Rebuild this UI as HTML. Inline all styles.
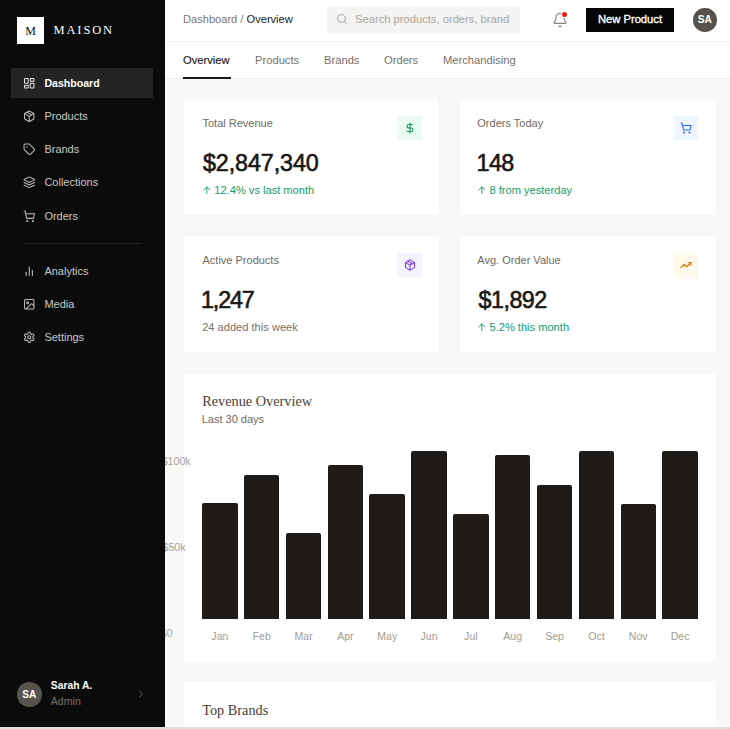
<!DOCTYPE html>
<html><head><meta charset="utf-8">
<style>
*{box-sizing:border-box;margin:0;padding:0}
html,body{width:730px;height:729px;overflow:hidden;background:#f9f9f7;font-family:"Liberation Sans",sans-serif;}
.abs{position:absolute}
#side{position:absolute;left:0;top:0;width:165px;height:729px;background:#0b0b0b;z-index:5}
.logo{left:17px;top:17px;width:27px;height:27px;background:#fff;color:#111;font-family:"Liberation Serif",serif;font-size:12px;display:flex;align-items:center;justify-content:center;padding-top:1px}
.brand{left:53.5px;top:22px;font-family:"Liberation Serif",serif;font-size:12.5px;letter-spacing:1.86px;color:#fff;line-height:16px}
.nav{position:absolute;left:11px;width:142px;height:30px;display:flex;align-items:center;padding-left:11.7px;color:#c9c9c6;font-size:11px}
.nav svg{width:12.5px;height:12.5px;margin-right:9.2px;flex:none;stroke:#bdbdb9;fill:none;stroke-width:2;stroke-linecap:round;stroke-linejoin:round}
.nav.on{background:#242424;color:#fff;font-weight:bold;font-size:10.6px}
.nav.on svg{stroke:#e6e6e6}
.div{left:23px;top:243px;width:118px;height:1px;background:#202020}
#hdr{left:165px;top:0;width:565px;height:42px;background:#fff;border-bottom:1px solid #f1f0ed}
.crumb{left:183px;top:12px;font-size:11.1px;color:#7b756f;line-height:14px}
.crumb b{font-weight:normal;color:#1c1917}
.search{left:327px;top:7px;width:193px;height:26px;background:#f4f4f2;overflow:hidden}
.search span{position:absolute;left:28px;top:4.6px;width:155px;overflow:hidden;font-size:11.2px;color:#aaa49d;white-space:nowrap;line-height:14px}
.btn{left:586px;top:8px;width:88px;height:24px;background:#050505;color:#fff;font-size:11.2px;-webkit-text-stroke:0.35px #fff;display:flex;align-items:center;justify-content:center;padding-bottom:2.4px}
.av{border-radius:50%;background:#57524b;color:#fff;font-weight:bold;display:flex;align-items:center;justify-content:center}
#tabs{left:165px;top:42px;width:565px;height:37px;background:#fff;border-bottom:1px solid #efeeeb}
.tab{position:absolute;top:53px;font-size:11.2px;color:#77716b;line-height:14px}
.tab.on{color:#1c1917;font-weight:normal;-webkit-text-stroke:0.15px #1c1917}
.ul{left:183px;top:77px;width:48px;height:2px;background:#1c1917;z-index:2}
.card{position:absolute;background:#fff;border:1px solid #f6f6f5}
.ct{position:absolute;left:18.5px;font-size:11px;color:#6f6a64;line-height:14px}
.cv{position:absolute;left:18px;font-size:23.3px;color:#1a1816;line-height:28px;-webkit-text-stroke:0.6px #1a1816}
.cs{position:absolute;left:18.5px;padding-left:11.8px;font-size:11.1px;color:#139d6d;line-height:14px}
.cs.g{padding-left:0;left:18.2px}
.ar{position:absolute;left:0;top:3.2px;width:7.6px;height:8px;fill:none;stroke:#139d6d;stroke-width:1;stroke-linecap:round;stroke-linejoin:round}
.cs.g{color:#77716b}
.ib{position:absolute;left:214px;top:17px;width:24px;height:24px;display:flex;align-items:center;justify-content:center}
.ib svg{width:12px;height:12px;fill:none;stroke-width:2.2;stroke-linecap:round;stroke-linejoin:round}
.bars{left:202.1px;top:440px;width:495.7px;height:179px;display:flex;gap:6.4px;align-items:flex-end}
.bar{flex:1;background:#1f1b18;border-radius:2px 2px 0 0}
.ml{position:absolute;top:629px;font-size:10.6px;color:#a29d96;line-height:14px;width:40px;text-align:center}
.yl{position:absolute;font-size:10.6px;color:#a7a29b;line-height:14px;text-align:right;width:60px}
.ser{font-family:"Liberation Serif",serif;color:#46413c}
</style></head><body>

<div id="hdr" class="abs"></div>
<div class="abs crumb">Dashboard / <b>Overview</b></div>
<div class="abs search">
  <svg class="abs" style="left:9px;top:5.5px" width="12" height="12" viewBox="0 0 24 24" fill="none" stroke="#a8a29e" stroke-width="2" stroke-linecap="round"><circle cx="11" cy="11" r="8"/><path d="m21 21-4.3-4.3"/></svg>
  <span>Search products, orders, brands...</span>
</div>
<svg class="abs" style="left:552.3px;top:12px" width="16" height="16" viewBox="0 0 24 24" fill="none" stroke="#8a8580" stroke-width="1.8" stroke-linecap="round" stroke-linejoin="round"><path d="M10.268 21a2 2 0 0 0 3.464 0"/><path d="M3.262 15.326A1 1 0 0 0 4 17h16a1 1 0 0 0 .74-1.673C19.41 13.956 18 12.499 18 8A6 6 0 0 0 6 8c0 4.499-1.411 5.956-2.738 7.326"/></svg>
<div class="abs" style="left:561.8px;top:12.4px;width:5px;height:5px;border-radius:50%;background:#f01a1a;box-shadow:0 0 0 1px #fff"></div>
<div class="abs btn">New Product</div>
<div class="abs av" style="left:693px;top:8px;width:23.5px;height:23.5px;font-size:10.2px">SA</div>

<div id="tabs" class="abs"></div>
<div class="tab on" style="left:183px">Overview</div>
<div class="tab" style="left:255px">Products</div>
<div class="tab" style="left:324px">Brands</div>
<div class="tab" style="left:384px">Orders</div>
<div class="tab" style="left:443px">Merchandising</div>
<div class="abs ul"></div>

<!-- stat cards -->
<div class="card" style="left:183px;top:98px;width:257px;height:118px">
  <div class="ct" style="top:17px">Total Revenue</div>
  <div class="ib" style="background:#ebfbf2"><svg viewBox="0 0 24 24" stroke="#169a6c"><line x1="12" x2="12" y1="2" y2="22"/><path d="M17 5H9.5a3.5 3.5 0 0 0 0 7h5a3.5 3.5 0 0 1 0 7H6"/></svg></div>
  <div class="cv" style="top:50px;margin-left:1px;letter-spacing:-0.1px">$2,847,340</div>
  <div class="cs" style="top:84px"><svg class="ar" viewBox="0 0 8 8"><path d="M4 7.6V0.8M0.9 3.9L4 0.8L7.1 3.9"/></svg>12.4% vs last month</div>
</div>
<div class="card" style="left:459px;top:98px;width:258px;height:118px">
  <div class="ct" style="top:17px;margin-left:-1.2px">Orders Today</div>
  <div class="ib" style="background:#eff6ff"><svg viewBox="0 0 24 24" stroke="#2a6af5"><circle cx="8" cy="21" r="1"/><circle cx="19" cy="21" r="1"/><path d="M2.05 2.05h2l2.66 12.42a2 2 0 0 0 2 1.58h9.78a2 2 0 0 0 1.95-1.57l1.65-7.43H5.12"/></svg></div>
  <div class="cv" style="top:50px;margin-left:-1.4px;letter-spacing:-0.6px">148</div>
  <div class="cs" style="top:84px;margin-left:-0.8px"><svg class="ar" viewBox="0 0 8 8"><path d="M4 7.6V0.8M0.9 3.9L4 0.8L7.1 3.9"/></svg>8 from yesterday</div>
</div>
<div class="card" style="left:183px;top:235px;width:257px;height:118px">
  <div class="ct" style="top:17px">Active Products</div>
  <div class="ib" style="background:#f5f3ff"><svg viewBox="0 0 24 24" stroke="#7c3aed"><path d="M11 21.73a2 2 0 0 0 2 0l7-4A2 2 0 0 0 21 16V8a2 2 0 0 0-1-1.73l-7-4a2 2 0 0 0-2 0l-7 4A2 2 0 0 0 3 8v8a2 2 0 0 0 1 1.73z"/><path d="M12 22V12"/><path d="m3.3 7 7.703 4.734a2 2 0 0 0 1.994 0L20.7 7"/><path d="m7.5 4.27 9 5.15"/></svg></div>
  <div class="cv" style="top:50px;margin-left:-1px;letter-spacing:-1.15px">1,247</div>
  <div class="cs g" style="top:84px">24 added this week</div>
</div>
<div class="card" style="left:459px;top:235px;width:258px;height:118px">
  <div class="ct" style="top:17px;margin-left:-1.2px">Avg. Order Value</div>
  <div class="ib" style="background:#fefaea"><svg viewBox="0 0 24 24" stroke="#e07a10"><polyline points="22 7 13.5 15.5 8.5 10.5 2 17"/><polyline points="16 7 22 7 22 13"/></svg></div>
  <div class="cv" style="top:50px;margin-left:0.5px;letter-spacing:-0.5px">$1,892</div>
  <div class="cs" style="top:84px;margin-left:-0.8px"><svg class="ar" viewBox="0 0 8 8"><path d="M4 7.6V0.8M0.9 3.9L4 0.8L7.1 3.9"/></svg>5.2% this month</div>
</div>

<!-- chart -->
<div class="card" style="left:183px;top:372px;width:534px;height:291px">
  <div class="abs ser" style="left:18.2px;top:19px;font-size:14.3px;line-height:18px">Revenue Overview</div>
  <div class="ct" style="top:39.3px;margin-left:-0.8px">Last 30 days</div>
</div>
<div class="yl" style="left:130.6px;top:454px">$100k</div>
<div class="yl" style="left:125.5px;top:540px">$50k</div>
<div class="yl" style="left:112.6px;top:626px">$0</div>
<div class="abs bars">
  <div class="bar" style="height:115.6px"></div>
  <div class="bar" style="height:144.5px"></div>
  <div class="bar" style="height:85.7px"></div>
  <div class="bar" style="height:154.1px"></div>
  <div class="bar" style="height:124.9px"></div>
  <div class="bar" style="height:168.3px"></div>
  <div class="bar" style="height:105px"></div>
  <div class="bar" style="height:163.9px"></div>
  <div class="bar" style="height:134.4px"></div>
  <div class="bar" style="height:168.3px"></div>
  <div class="bar" style="height:115.4px"></div>
  <div class="bar" style="height:168.3px"></div>
</div>
<div class="ml" style="left:199.9px">Jan</div>
<div class="ml" style="left:241.7px">Feb</div>
<div class="ml" style="left:283.6px">Mar</div>
<div class="ml" style="left:325.4px">Apr</div>
<div class="ml" style="left:367.2px">May</div>
<div class="ml" style="left:409.1px">Jun</div>
<div class="ml" style="left:450.9px">Jul</div>
<div class="ml" style="left:492.7px">Aug</div>
<div class="ml" style="left:534.6px">Sep</div>
<div class="ml" style="left:576.4px">Oct</div>
<div class="ml" style="left:618.2px">Nov</div>
<div class="ml" style="left:660.1px">Dec</div>

<div class="card" style="left:183px;top:680px;width:534px;height:80px">
  <div class="abs ser" style="left:18.2px;top:19.5px;font-size:14.3px;line-height:18px">Top Brands</div>
</div>

<!-- sidebar -->
<div id="side">
  <div class="abs logo">M</div>
  <div class="abs brand">MAISON</div>

  <div class="nav on" style="top:68px"><svg viewBox="0 0 24 24"><rect width="7" height="9" x="3" y="3" rx="1"/><rect width="7" height="5" x="14" y="3" rx="1"/><rect width="7" height="9" x="14" y="12" rx="1"/><rect width="7" height="5" x="3" y="16" rx="1"/></svg>Dashboard</div>
  <div class="nav" style="top:101.25px"><svg viewBox="0 0 24 24"><path d="M11 21.73a2 2 0 0 0 2 0l7-4A2 2 0 0 0 21 16V8a2 2 0 0 0-1-1.73l-7-4a2 2 0 0 0-2 0l-7 4A2 2 0 0 0 3 8v8a2 2 0 0 0 1 1.73z"/><path d="M12 22V12"/><path d="m3.3 7 7.703 4.734a2 2 0 0 0 1.994 0L20.7 7"/><path d="m7.5 4.27 9 5.15"/></svg>Products</div>
  <div class="nav" style="top:134px"><svg viewBox="0 0 24 24"><path d="M12.586 2.586A2 2 0 0 0 11.172 2H4a2 2 0 0 0-2 2v7.172a2 2 0 0 0 .586 1.414l8.704 8.704a2.426 2.426 0 0 0 3.42 0l6.58-6.58a2.426 2.426 0 0 0 0-3.420z"/><circle cx="7.5" cy="7.5" r=".5" fill="currentColor"/></svg>Brands</div>
  <div class="nav" style="top:167.3px"><svg viewBox="0 0 24 24"><path d="m12.83 2.18a2 2 0 0 0-1.66 0L2.6 6.08a1 1 0 0 0 0 1.83l8.58 3.91a2 2 0 0 0 1.66 0l8.58-3.9a1 1 0 0 0 0-1.83Z"/><path d="m22 17.65-9.17 4.16a2 2 0 0 1-1.66 0L2 17.65"/><path d="m22 12.65-9.17 4.160a2 2 0 0 1-1.66 0L2 12.65"/></svg>Collections</div>
  <div class="nav" style="top:201px"><svg viewBox="0 0 24 24"><circle cx="8" cy="21" r="1"/><circle cx="19" cy="21" r="1"/><path d="M2.05 2.05h2l2.66 12.42a2 2 0 0 0 2 1.58h9.78a2 2 0 0 0 1.95-1.57l1.65-7.43H5.12"/></svg>Orders</div>
  <div class="abs div"></div>
  <div class="nav" style="top:256px"><svg viewBox="0 0 24 24"><line x1="18" x2="18" y1="20" y2="10"/><line x1="12" x2="12" y1="20" y2="4"/><line x1="6" x2="6" y1="20" y2="14"/></svg>Analytics</div>
  <div class="nav" style="top:288.8px"><svg viewBox="0 0 24 24"><rect width="18" height="18" x="3" y="3" rx="2" ry="2"/><circle cx="9" cy="9" r="2"/><path d="m21 15-3.086-3.086a2 2 0 0 0-2.828 0L6 21"/></svg>Media</div>
  <div class="nav" style="top:322px"><svg viewBox="0 0 24 24"><path d="M12.22 2h-.44a2 2 0 0 0-2 2v.18a2 2 0 0 1-1 1.73l-.43.25a2 2 0 0 1-2 0l-.15-.08a2 2 0 0 0-2.73.73l-.22.38a2 2 0 0 0 .73 2.73l.15.1a2 2 0 0 1 1 1.72v.51a2 2 0 0 1-1 1.74l-.15.09a2 2 0 0 0-.73 2.730l.22.38a2 2 0 0 0 2.73.73l.15-.08a2 2 0 0 1 2 0l.43.25a2 2 0 0 1 1 1.73V20a2 2 0 0 0 2 2h.44a2 2 0 0 0 2-2v-.18a2 2 0 0 1 1-1.73l.43-.25a2 2 0 0 1 2 0l.15.08a2 2 0 0 0 2.73-.73l.22-.39a2 2 0 0 0-.73-2.73l-.15-.08a2 2 0 0 1-1-1.74v-.5a2 2 0 0 1 1-1.74l.15-.09a2 2 0 0 0 .73-2.73l-.22-.38a2 2 0 0 0-2.73-.73l-.15.08a2 2 0 0 1-2 0l-.43-.25a2 2 0 0 1-1-1.73V4a2 2 0 0 0-2-2z"/><circle cx="12" cy="12" r="3"/></svg>Settings</div>

  <div class="abs av" style="left:17px;top:682px;width:24.5px;height:24.5px;font-size:10px">SA</div>
  <div class="abs" style="left:50.8px;top:679px;font-size:10.3px;font-weight:bold;color:#fff;line-height:14px">Sarah A.</div>
  <div class="abs" style="left:50.8px;top:694px;font-size:10.6px;color:#77726b;line-height:14px">Admin</div>
  <svg class="abs" style="left:135px;top:688px" width="12" height="12" viewBox="0 0 24 24" fill="none" stroke="#6d6d6d" stroke-width="2" stroke-linecap="round" stroke-linejoin="round"><path d="m9 18 6-6-6-6"/></svg>
</div>
<div class="abs" style="left:0;top:727px;width:730px;height:2px;background:#e2e0db;z-index:10"></div>
</body></html>
